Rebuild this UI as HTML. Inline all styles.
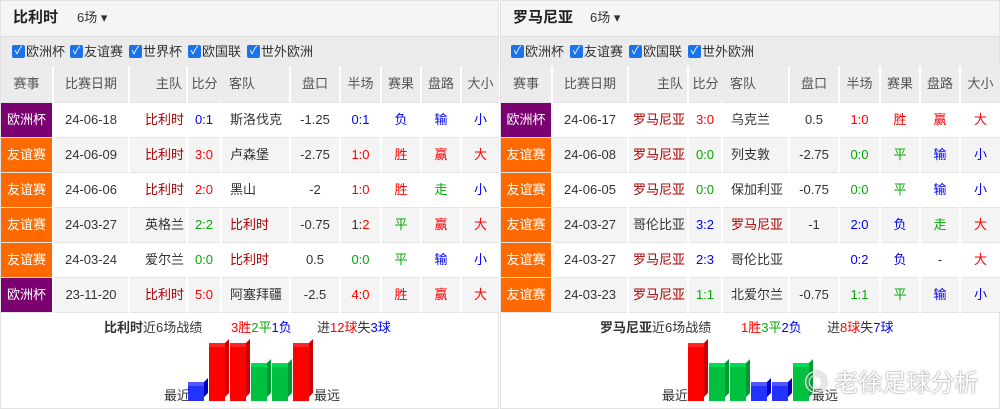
<!DOCTYPE html>
<html><head><meta charset="utf-8"><style>
*{margin:0;padding:0;box-sizing:border-box}
body{width:1000px;height:409px;background:#fff;font-family:"Liberation Sans","Noto Sans CJK SC",sans-serif;font-size:13px;color:#333;position:relative;overflow:hidden;line-height:1.2}
.p{position:absolute;top:0;height:409px;border:1px solid #e2e2e2;background:#fff}
.top{position:absolute;left:0;right:0;top:0;height:36px;background:#f5f5f5;border-bottom:1px solid #e0e0e0}
.top b{position:absolute;left:12px;top:8px;font-size:15px;color:#222}
.top span{position:absolute;top:9px;font-size:13px;color:#333}
.flt{position:absolute;left:0;right:0;top:36px;height:29px;background:#ebebeb}
.cb{position:absolute;top:7px;height:16px;line-height:16px;font-size:13px;color:#333;white-space:nowrap}
.cb i{position:relative;top:-1px;display:inline-block;width:13px;height:13px;background:#1a73e8;border-radius:2px;vertical-align:middle;color:#fff;font-style:normal;font-size:11px;line-height:13px;text-align:center;margin-right:1px}
table{position:absolute;left:0;top:65px;border-collapse:collapse;table-layout:fixed}
td{height:35px;text-align:center;border-right:2px solid #fff;border-bottom:1px solid #e4e4e4;white-space:nowrap;font-size:13px;background:#fff;line-height:16px;padding:0}
tr.h td{background:#ececec;color:#555;height:36px}
tr.g td{background:#f4f4f4}
td.eu{background:#7b0070!important;color:#fff}
td.fr{background:#ff6a00!important;color:#fff}
.r{color:#f00}.gr{color:#0a0}.bl{color:#00f}.t{color:#a00}
td.hm{text-align:right;padding-right:2px}
td.aw{text-align:left;padding-left:8px}
.sum{position:absolute;top:319px;font-size:13px;white-space:nowrap}
.bar{position:absolute;width:16px}
.bar:after{content:"";position:absolute;right:-4px;top:-4px;width:4px;height:100%;transform:skewY(-45deg);transform-origin:0 100%}
.bar:before{content:"";position:absolute;left:0;top:-4px;width:16px;height:4px}
.R{background:#f00}.R:after{background:#c00}.R:before{background:#f22}
.G{background:#00c040}.G:after{background:#009a30}.G:before{background:#0d5}
.B{background:#2233ff}.B:after{background:#0000c0}.B:before{background:#55f}
.lb{position:absolute;top:387px;font-size:13px}
</style></head><body>

<div class="p" style="left:0;width:499px">
<div class="top"><b>比利时</b><span style="left:76px">6场 ▾</span></div>
<div class="flt">
<span class="cb" style="left:11px"><i>✓</i>欧洲杯</span>
<span class="cb" style="left:69px"><i>✓</i>友谊赛</span>
<span class="cb" style="left:128px"><i>✓</i>世界杯</span>
<span class="cb" style="left:187px"><i>✓</i>欧国联</span>
<span class="cb" style="left:246px"><i>✓</i>世外欧洲</span>
</div>
<table style="width:499px">
<colgroup><col style="width:52px"><col style="width:76px"><col style="width:58px"><col style="width:34px"><col style="width:69px"><col style="width:50px"><col style="width:41px"><col style="width:40px"><col style="width:40px"><col style="width:39px"></colgroup>
<tr class="h"><td>赛事</td><td>比赛日期</td><td class="hm" style="padding-right:4px">主队</td><td style="border-right:0">比分</td><td class="aw">客队</td><td>盘口</td><td>半场</td><td>赛果</td><td>盘路</td><td>大小</td></tr>
<tr><td class="eu">欧洲杯</td><td>24-06-18</td><td class="hm t">比利时</td><td class="bl">0:1</td><td class="aw">斯洛伐克</td><td>-1.25</td><td class="bl">0:1</td><td class="bl">负</td><td class="bl">输</td><td class="bl">小</td></tr>
<tr class="g"><td class="fr">友谊赛</td><td>24-06-09</td><td class="hm t">比利时</td><td class="r">3:0</td><td class="aw">卢森堡</td><td>-2.75</td><td class="r">1:0</td><td class="r">胜</td><td class="r">赢</td><td class="r">大</td></tr>
<tr><td class="fr">友谊赛</td><td>24-06-06</td><td class="hm t">比利时</td><td class="r">2:0</td><td class="aw">黑山</td><td>-2</td><td class="r">1:0</td><td class="r">胜</td><td class="gr">走</td><td class="bl">小</td></tr>
<tr class="g"><td class="fr">友谊赛</td><td>24-03-27</td><td class="hm">英格兰</td><td class="gr">2:2</td><td class="aw t">比利时</td><td>-0.75</td><td>1:<span class="r">2</span></td><td class="gr">平</td><td class="r">赢</td><td class="r">大</td></tr>
<tr><td class="fr">友谊赛</td><td>24-03-24</td><td class="hm">爱尔兰</td><td class="gr">0:0</td><td class="aw t">比利时</td><td>0.5</td><td class="gr">0:0</td><td class="gr">平</td><td class="bl">输</td><td class="bl">小</td></tr>
<tr class="g"><td class="eu">欧洲杯</td><td>23-11-20</td><td class="hm t">比利时</td><td class="r">5:0</td><td class="aw">阿塞拜疆</td><td>-2.5</td><td class="r">4:0</td><td class="r">胜</td><td class="r">赢</td><td class="r">大</td></tr>
</table>
<div class="sum" style="left:103px"><b>比利时</b>近6场战绩</div>
<div class="sum" style="left:230px"><span class="r">3胜</span><span class="gr">2平</span><span class="bl">1负</span></div>
<div class="sum" style="left:316px">进<span class="r">12球</span>失<span class="bl">3球</span></div>
<div class="lb" style="left:163px">最近</div>
<div class="bar B" style="left:187px;top:385px;height:15px"></div>
<div class="bar R" style="left:208px;top:346px;height:54px"></div>
<div class="bar R" style="left:229px;top:346px;height:54px"></div>
<div class="bar G" style="left:250px;top:366px;height:34px"></div>
<div class="bar G" style="left:271px;top:366px;height:34px"></div>
<div class="bar R" style="left:292px;top:346px;height:54px"></div>
<div class="lb" style="left:313px">最远</div>
</div>

<div class="p" style="left:500px;width:500px">
<div class="top"><b>罗马尼亚</b><span style="left:89px">6场 ▾</span></div>
<div class="flt">
<span class="cb" style="left:10px"><i>✓</i>欧洲杯</span>
<span class="cb" style="left:69px"><i>✓</i>友谊赛</span>
<span class="cb" style="left:128px"><i>✓</i>欧国联</span>
<span class="cb" style="left:187px"><i>✓</i>世外欧洲</span>
</div>
<table style="width:500px">
<colgroup><col style="width:51px"><col style="width:76px"><col style="width:60px"><col style="width:34px"><col style="width:67px"><col style="width:50px"><col style="width:41px"><col style="width:40px"><col style="width:40px"><col style="width:41px"></colgroup>
<tr class="h"><td>赛事</td><td>比赛日期</td><td class="hm" style="padding-right:4px">主队</td><td style="border-right:0">比分</td><td class="aw">客队</td><td>盘口</td><td>半场</td><td>赛果</td><td>盘路</td><td>大小</td></tr>
<tr><td class="eu">欧洲杯</td><td>24-06-17</td><td class="hm t">罗马尼亚</td><td class="r">3:0</td><td class="aw">乌克兰</td><td>0.5</td><td class="r">1:0</td><td class="r">胜</td><td class="r">赢</td><td class="r">大</td></tr>
<tr class="g"><td class="fr">友谊赛</td><td>24-06-08</td><td class="hm t">罗马尼亚</td><td class="gr">0:0</td><td class="aw">列支敦</td><td>-2.75</td><td class="gr">0:0</td><td class="gr">平</td><td class="bl">输</td><td class="bl">小</td></tr>
<tr><td class="fr">友谊赛</td><td>24-06-05</td><td class="hm t">罗马尼亚</td><td class="gr">0:0</td><td class="aw">保加利亚</td><td>-0.75</td><td class="gr">0:0</td><td class="gr">平</td><td class="bl">输</td><td class="bl">小</td></tr>
<tr class="g"><td class="fr">友谊赛</td><td>24-03-27</td><td class="hm">哥伦比亚</td><td class="bl">3:2</td><td class="aw t">罗马尼亚</td><td>-1</td><td class="bl">2:0</td><td class="bl">负</td><td class="gr">走</td><td class="r">大</td></tr>
<tr><td class="fr">友谊赛</td><td>24-03-27</td><td class="hm t">罗马尼亚</td><td class="bl">2:3</td><td class="aw">哥伦比亚</td><td></td><td class="bl">0:2</td><td class="bl">负</td><td>-</td><td class="r">大</td></tr>
<tr class="g"><td class="fr">友谊赛</td><td>24-03-23</td><td class="hm t">罗马尼亚</td><td class="gr">1:1</td><td class="aw">北爱尔兰</td><td>-0.75</td><td class="gr">1:1</td><td class="gr">平</td><td class="bl">输</td><td class="bl">小</td></tr>
</table>
<div class="sum" style="left:99px"><b>罗马尼亚</b>近6场战绩</div>
<div class="sum" style="left:240px"><span class="r">1胜</span><span class="gr">3平</span><span class="bl">2负</span></div>
<div class="sum" style="left:326px">进<span class="r">8球</span>失<span class="bl">7球</span></div>
<div class="lb" style="left:161px">最近</div>
<div class="bar R" style="left:187px;top:346px;height:54px"></div>
<div class="bar G" style="left:208px;top:366px;height:34px"></div>
<div class="bar G" style="left:229px;top:366px;height:34px"></div>
<div class="bar B" style="left:250px;top:385px;height:15px"></div>
<div class="bar B" style="left:271px;top:385px;height:15px"></div>
<div class="bar G" style="left:292px;top:366px;height:34px"></div>
<div class="lb" style="left:311px">最远</div>
<div style="position:absolute;left:303px;top:369px;font-size:24px;color:#fff;text-shadow:0 0 2px #999,0 0 1px #888;white-space:nowrap">◎ 老徐足球分析</div>
</div>
</body></html>
